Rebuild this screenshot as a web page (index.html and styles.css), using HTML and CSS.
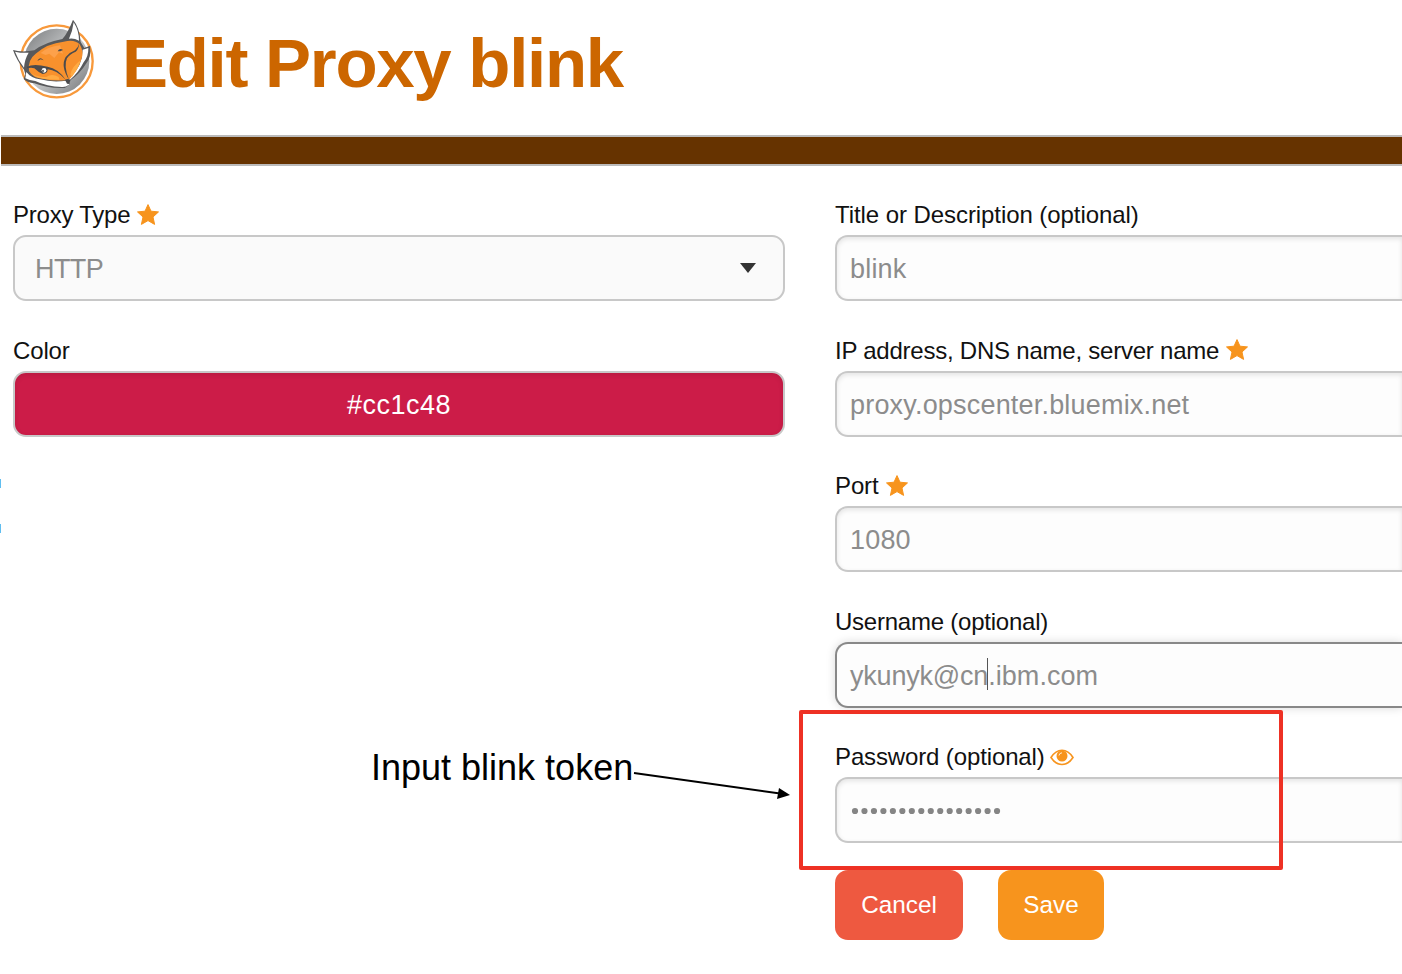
FILE: index.html
```html
<!DOCTYPE html>
<html lang="en">
<head>
<meta charset="utf-8">
<title>Edit Proxy blink</title>
<link rel="stylesheet" href="styles.css">
</head>
<body>
<svg class="defs" width="0" height="0"><symbol id="star" viewBox="0 0 22 21"><path stroke-width="1" stroke-linejoin="round" d="M11 .6 14 7.2 21.5 7.9 16 13 17.6 20.4 11 16.6 4.4 20.4 6 13 .5 7.9 8 7.2Z"/></symbol></svg>
<header class="header">
  <svg class="logo" viewBox="0 0 330 300">
    <defs><linearGradient id="disc" x1="0" y1="0" x2="1" y2="1"><stop offset="0" stop-color="#77797b"/><stop offset=".5" stop-color="#c8cacb"/><stop offset="1" stop-color="#747678"/></linearGradient></defs>
    <circle cx="170" cy="154" r="108" fill="#fff" stroke="#f8993b" stroke-width="7"/>
    <circle cx="170" cy="154" r="98" fill="url(#disc)"/>
    <path d="M39 120Q65 128 103 121Q134 97 187 87Q203 70 219 29Q239 52 242 96L253 114 270 107Q275 141 259 160Q241 190 211 211L209 221Q198 236 186 234Q143 235 103 220Q80 217 71 207L76 193 72 179Q49 149 39 120Z" fill="#58595b"/>
    <path d="M45 125Q67 130 86 128Q74 147 72 173Q54 150 45 125Z" fill="#fff"/>
    <path d="M221 37Q237 62 237 92Q221 83 207 86Q218 63 221 37Z" fill="#fff"/>
    <path d="M79 186Q94 205 120 208Q157 218 199 212L212 199Q247 169 248 119L265 114Q266 140 250 158Q236 187 210 209L207 224Q197 232 186 231Q140 230 106 213Q88 211 76 205Z" fill="#fff"/>
    <path d="M87 183Q82 150 107 131Q142 100 191 95Q223 86 239 103Q254 127 243 151Q231 182 209 208L195 211Q161 214 129 206Q99 205 87 183Z" fill="#f8912d"/>
    <path d="M122 129Q144 110 180 106L189 131 177 127 163 144 148 131 137 135Z" fill="#fda14b"/>
    <path d="M176 201Q155 189 139 201Q112 203 95 190Q108 210 178 209M211 194Q216 169 242 151Q237 174 216 200Z" fill="#ffab43"/>
    <path d="M81 170Q101 160 143 170Q174 175 197 209Q170 180 143 178Q144 190 128 192Q114 186 103 175Q94 172 81 175ZM207 209Q181 169 197 141Q207 128 225 121Q235 112 237 101Q237 116 227 125Q210 131 201 145Q190 168 207 209Z" fill="#4b4b4d"/>
    <path d="M112 153Q119 137 131 151L122 148ZM173 124Q179 113 189 120L181 124ZM195 209Q204 205 211 209L208 222 201 221Z" fill="#4b4b4d"/>
    <circle cx="132" cy="181" r="7" fill="#fff"/><circle cx="129" cy="183" r="3.5" fill="#67686a"/>
  </svg>
  <h1 class="title">Edit Proxy blink</h1>
</header>
<div class="bar"></div>
<main class="form">
  <section class="column">
    <div class="group"><label class="label label-tight">Proxy Type <svg class="star"><use href="#star"/></svg></label>
      <div class="field select"><span>HTTP</span><svg class="caret" viewBox="0 0 16 10"><path d="M0 0H16L8 10Z"/></svg></div></div>
    <div class="group"><label class="label">Color</label><div class="field color">#cc1c48</div></div>
  </section>
  <section class="column inputs">
    <div class="group"><label class="label label-wide">Title or Description (optional)</label><div class="field">blink</div></div>
    <div class="group"><label class="label label-tight">IP address, DNS name, server name <svg class="star"><use href="#star"/></svg></label><div class="field">proxy.opscenter.bluemix.net</div></div>
    <div class="group"><label class="label">Port <svg class="star"><use href="#star"/></svg></label><div class="field">1080</div></div>
    <div class="group"><label class="label label-tight">Username (optional)</label><div class="field focused"><span class="before-cursor">ykunyk@cn</span><i class="cursor"></i><span>.ibm.com</span></div></div>
    <div class="group"><label class="label">Password (optional) <svg class="eye" viewBox="0 0 24 17"><path d="M1 8.5C7-1.2 17-1.2 23 8.5C17 17.8 7 17.8 1 8.5Z" fill="none" stroke="#f7941d" stroke-width="1.6"/><circle cx="12" cy="7" r="5.5" fill="#f7941d"/><path d="M9 6.5Q9.2 4 12 3.8" fill="none" stroke="#fff" stroke-width=".8"/></svg></label>
      <div class="field"><svg class="dots" viewBox="0 0 152 8"><path d="M4 4H148"/></svg></div></div>
    <div class="actions"><button class="button cancel">Cancel</button><button class="button save">Save</button></div>
  </section>
</main>
<div class="highlight"></div>
<div class="note">Input blink token</div>
<svg class="arrow" viewBox="0 0 160 32"><path d="M2 3 148 23.5" stroke="#000" stroke-width="2"/><path d="M147 18 158 25 145 29Z"/></svg>
<i class="mark mark-top"></i><i class="mark mark-bottom"></i>
</body>
</html>
```
FILE: styles.css
```css
* { box-sizing: border-box; }
body { margin: 0; height: 974px; overflow: hidden; position: relative; background: #fff; color: #111; font-family: "Liberation Sans", Arial, sans-serif; }
.defs { position: absolute; }
.header { height: 135px; display: flex; align-items: flex-start; }
.logo { width: 110px; height: 100px; margin-top: 10px; }
.title { margin: 24px 0 0 12px; font-size: 69px; line-height: 79px; letter-spacing: -1.28px; color: #cc6600; white-space: nowrap; }
.bar { height: 31px; margin-left: 1px; background: #663300; border: solid #bbb; border-width: 2px 0; }
.form { display: grid; grid-template-columns: 772px 1fr; column-gap: 50px; padding: 29px 0 0 13px; }
.column { display: flex; flex-direction: column; gap: 29.6px; min-width: 0; }
.group { height: 106px; }
.label { height: 40px; display: flex; align-items: center; font-size: 24px; letter-spacing: -.13px; white-space: nowrap; }
.label-tight { letter-spacing: -.23px; }
.label-wide { letter-spacing: -.07px; }
.star { width: 22px; height: 21px; margin: -2px 0 0 7px; fill: #f7941d; stroke: #f7941d; }
.eye { width: 24px; height: 17px; margin-left: 5px; }
.field { height: 66px; display: flex; align-items: center; padding: 3px 13px 0; border: 2px solid #c8c8c8; border-radius: 13px; background: #fdfdfd; box-shadow: inset 0 2px 5px #0000001a; color: #8c8c8c; font-size: 27px; letter-spacing: .19px; }
.inputs .field { border-right: 0; border-radius: 13px 0 0 13px; }
.select { justify-content: space-between; padding: 2px 27px 0 20px; background: #fafafa; box-shadow: none; letter-spacing: -.6px; }
.caret { width: 16px; height: 10px; fill: #333; margin-top: -3px; }
.color { justify-content: center; background: #cc1c48; color: #fff; letter-spacing: .5px; }
.inputs .focused { border-color: #888; box-shadow: 0 0 10px #00000026; letter-spacing: .05px; }
.before-cursor { letter-spacing: -.2px; }
.cursor { width: 1px; height: 32px; margin: -5px 0 0 -1px; background: #555; }
.dots { width: 152px; height: 8px; margin: -1px 0 0 1px; }
.dots path { stroke: #858585; stroke-width: 6.2; stroke-linecap: round; stroke-dasharray: 0 9.47; }
.actions { display: flex; gap: 35px; margin-top: -3px; }
.button { height: 70px; border: 0; border-radius: 13px; padding: 1px 0 0; color: #fff; font: 24.3px "Liberation Sans", Arial, sans-serif; }
.cancel { width: 128px; background: #ee5940; }
.save { width: 106px; background: #f7941d; }
.highlight { position: absolute; left: 799px; top: 710px; width: 484px; height: 160px; border: 4px solid #ee3124; border-radius: 2px; }
.note { position: absolute; left: 371px; top: 747px; font-size: 36px; line-height: 42px; color: #000; white-space: nowrap; }
.arrow { position: absolute; left: 632px; top: 770px; width: 160px; height: 32px; }
.mark { position: absolute; left: 0; width: 1px; height: 9px; background: #60bef0; }
.mark-top { top: 479px; }
.mark-bottom { top: 524px; }
```
